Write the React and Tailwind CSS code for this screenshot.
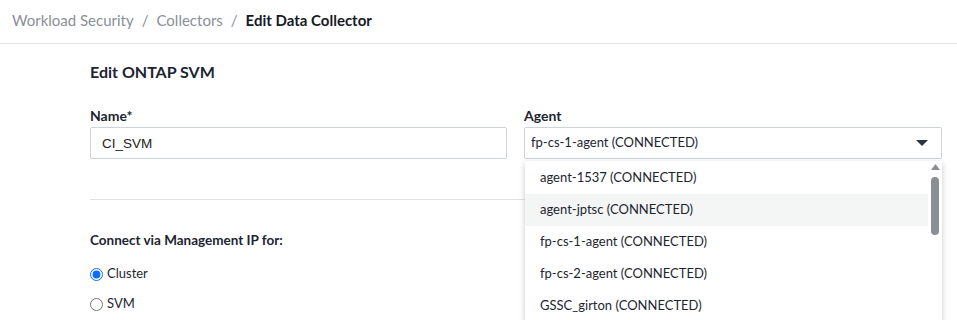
import React from 'react';

const agents = [
  'agent-1537 (CONNECTED)',
  'agent-jptsc (CONNECTED)',
  'fp-cs-1-agent (CONNECTED)',
  'fp-cs-2-agent (CONNECTED)',
  'GSSC_girton (CONNECTED)',
];

export default function App() {
  return (
    <div className="w-[957px] h-[320px] overflow-hidden bg-white text-[#1d2431] font-['Lato','Liberation_Sans',sans-serif]">
      {/* Breadcrumb */}
      <div className="h-[44px] border-b border-[#e4e4e4] flex items-center px-3 pb-[2px] text-[15px]">
        <span className="text-[#8a8f98]">Workload Security</span>
        <span className="text-[#8a8f98] mx-2">/</span>
        <span className="text-[#8a8f98]">Collectors</span>
        <span className="text-[#8a8f98] mx-2">/</span>
        <span className="font-bold text-[#141a24]">Edit Data Collector</span>
      </div>

      <div className="pl-[90px] pr-[16px]">
        <h1 className="text-[16px] font-bold mt-[18px] leading-[20px]">Edit ONTAP SVM</h1>

        <div className="grid grid-cols-[417px_418px] gap-x-[17px] mt-[26px]">
          <div>
            <label className="block text-[14px] font-bold leading-[16px] mb-[3px]">Name*</label>
            <input
              type="text"
              defaultValue="CI_SVM"
              className="w-full h-[32px] border border-[#cdd3db] rounded-[2px] px-[11px] text-[13.5px] text-[#222] font-['Liberation_Sans',sans-serif] outline-none"
            />
          </div>
          <div className="relative">
            <label className="block text-[14px] font-bold leading-[16px] mb-[3px]">Agent</label>
            <div className="h-[32px] border border-[#cdd3db] rounded-[2px] pl-[6px] pr-[8px] flex items-center justify-between text-[13px]">
              <span>fp-cs-1-agent (CONNECTED)</span>
              <svg width="12" height="8" viewBox="0 0 12 8" className="mr-[5px]">
                <path d="M0 1 L12 1 L6 7 Z" fill="#2b3440" />
              </svg>
            </div>

            {/* Dropdown list */}
            <div className="absolute left-[1px] right-0 top-[53px] h-[168px] bg-white shadow-[0_2px_6px_rgba(0,0,0,0.22)] flex z-10">
              <ul className="flex-1 pt-[1px]">
                {agents.map((a, i) => (
                  <li
                    key={a}
                    className={`h-[32px] flex items-center pl-[15px] text-[13px] ${i === 1 ? 'bg-[#f4f5f5]' : ''}`}
                  >
                    {a}
                  </li>
                ))}
              </ul>
              <div className="w-[14px] flex flex-col items-center pt-[3px]">
                <svg width="9" height="6" viewBox="0 0 9 6">
                  <path d="M0 6 L4.5 0 L9 6 Z" fill="#8a8e95" />
                </svg>
                <div className="w-[8px] h-[58px] rounded-[4px] bg-[#8a8e95] mt-[7px]" />
              </div>
            </div>
          </div>
        </div>

        <div className="border-t border-[#e2e2e2] mt-[40px] mr-[30px]" />

        <div className="text-[13.5px] font-bold mt-[32px] leading-[16px]">Connect via Management IP for:</div>
        <div className="mt-[18px] flex flex-col gap-[14px] text-[13px]">
          <label className="flex items-center gap-[4px] h-[16px]">
            <input type="radio" name="mip" defaultChecked className="m-0 w-[13px] h-[13px] accent-[#0a6cff]" />
            Cluster
          </label>
          <label className="flex items-center gap-[4px] h-[16px]">
            <input type="radio" name="mip" className="m-0 w-[13px] h-[13px]" />
            SVM
          </label>
        </div>
      </div>
    </div>
  );
}
